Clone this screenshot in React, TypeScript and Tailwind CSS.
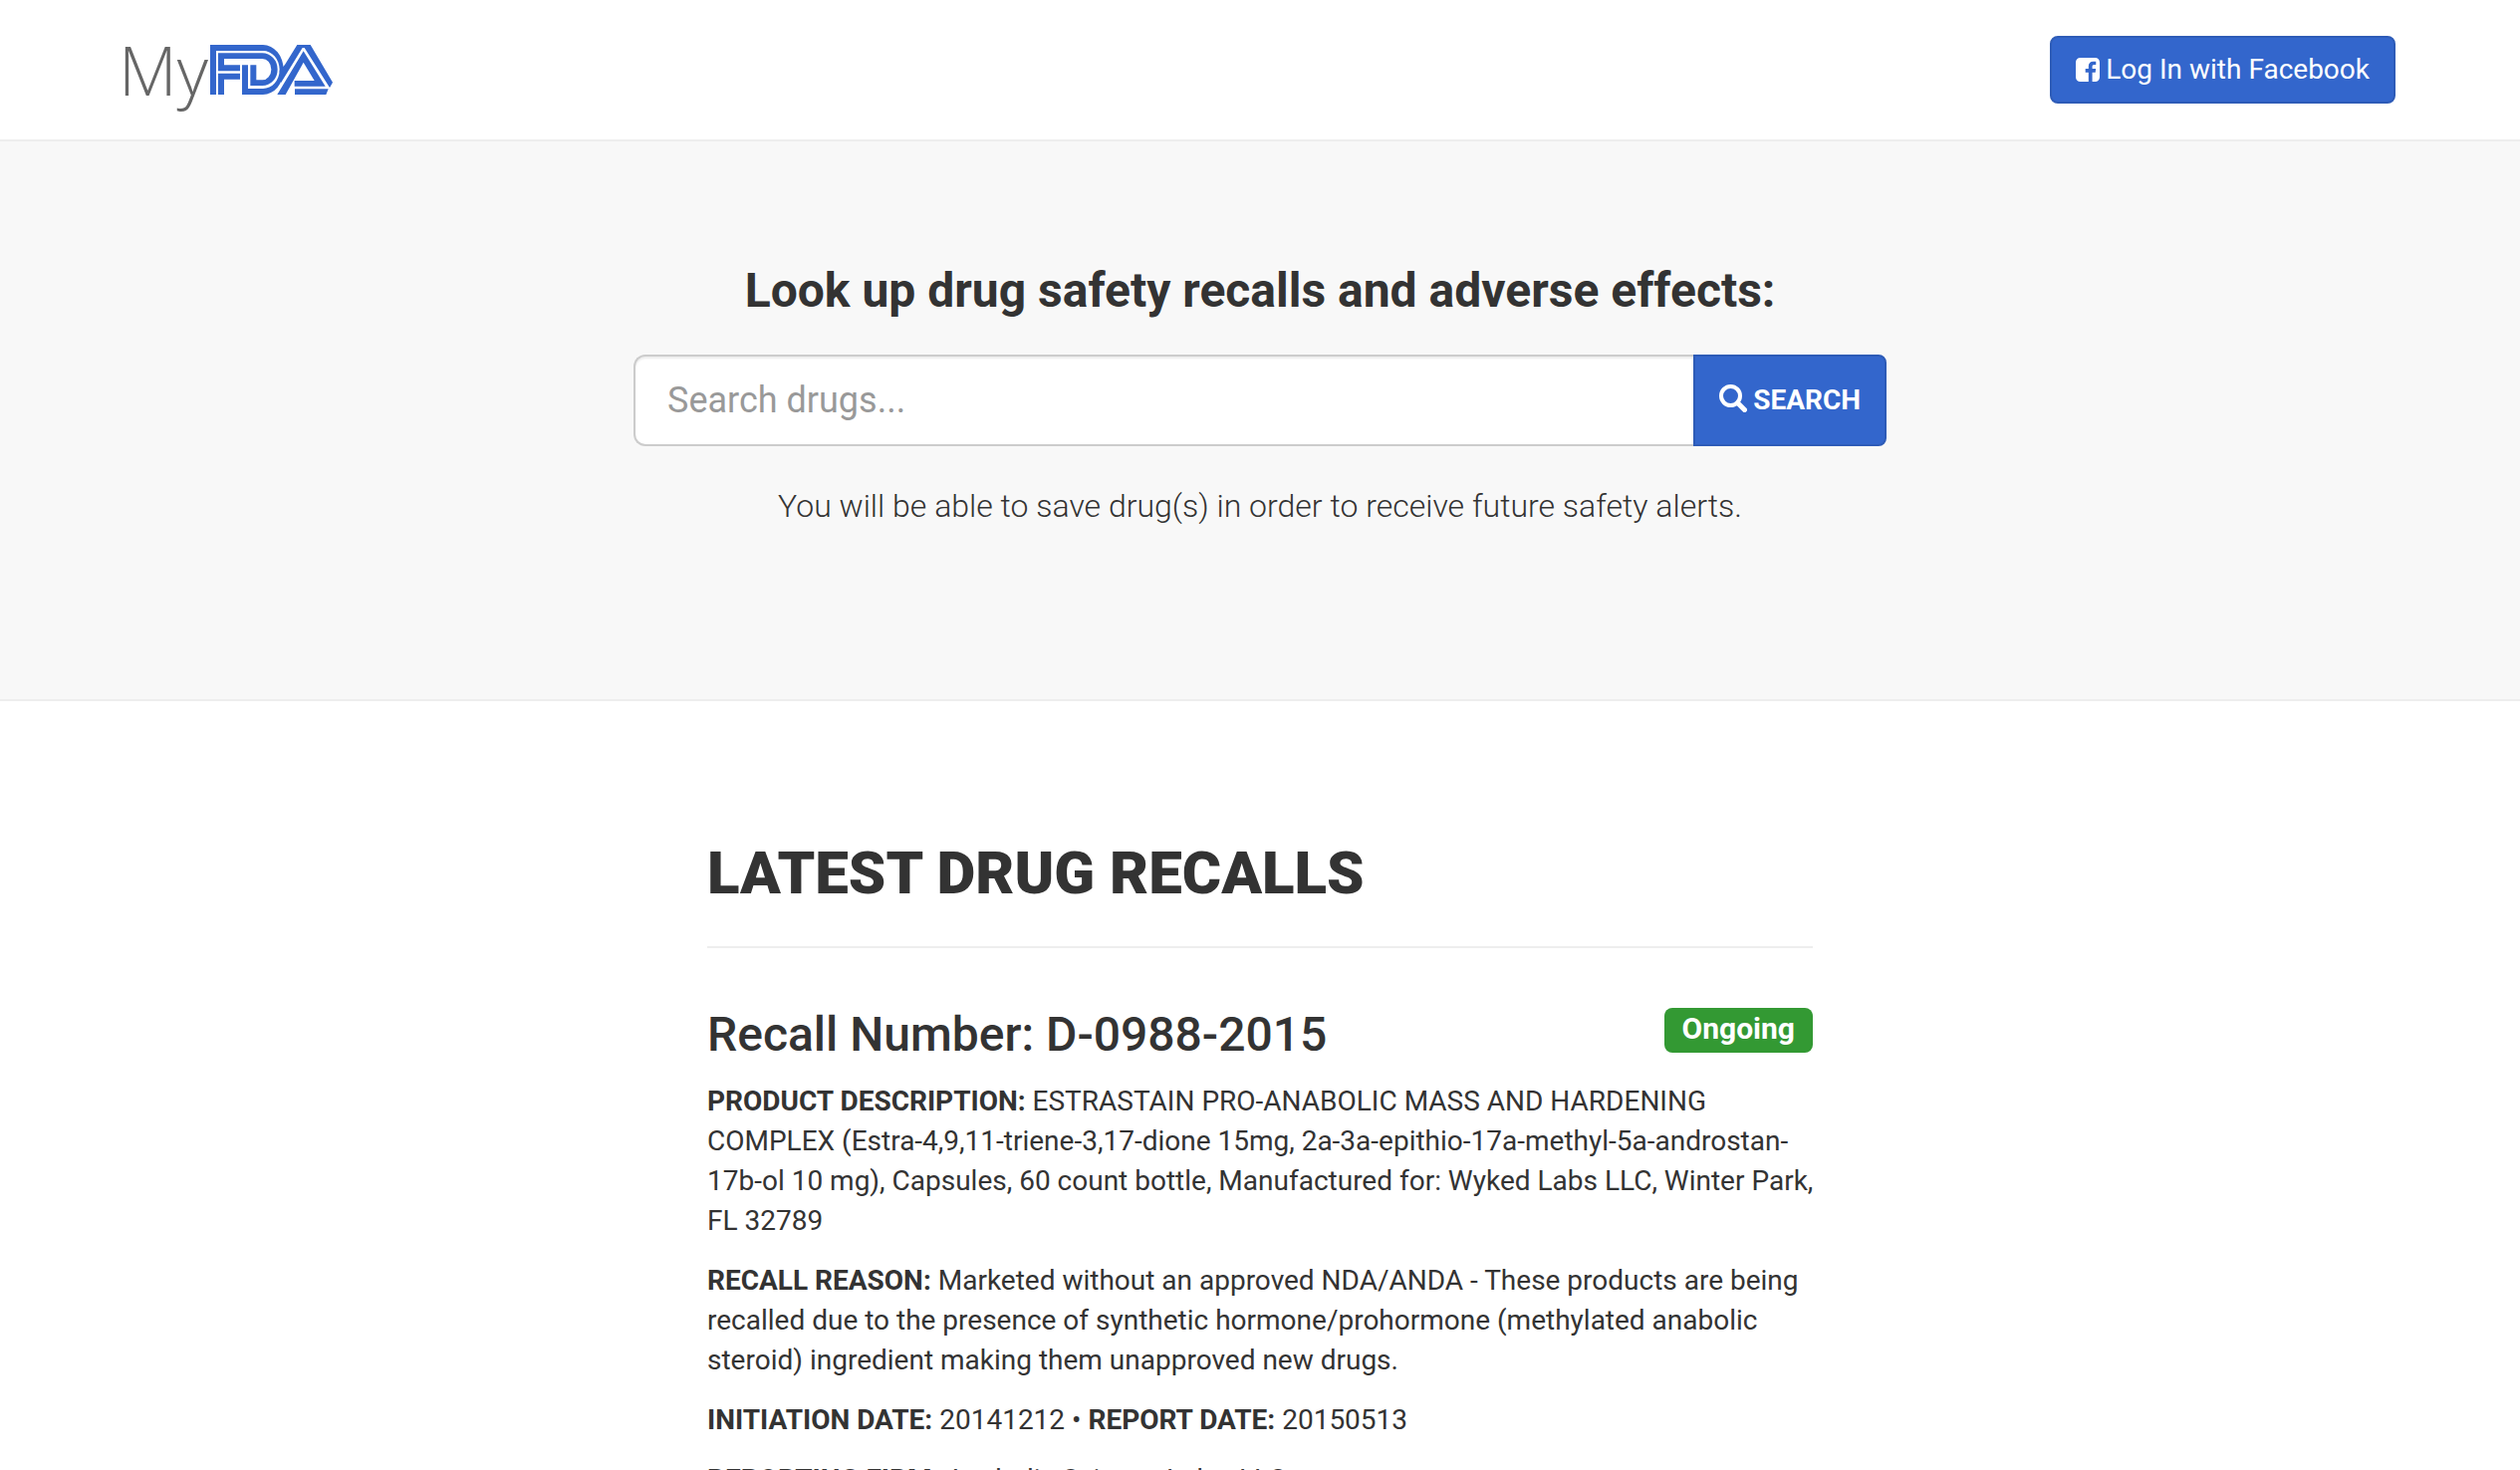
import React from "react";

const recalls = [
  {
    number: "D-0988-2015",
    status: "Ongoing",
    description:
      "ESTRASTAIN PRO-ANABOLIC MASS AND HARDENING COMPLEX (Estra-4,9,11-triene-3,17-dione 15mg, 2a-3a-epithio-17a-methyl-5a-androstan-17b-ol 10 mg), Capsules, 60 count bottle, Manufactured for: Wyked Labs LLC, Winter Park, FL 32789",
    reason:
      "Marketed without an approved NDA/ANDA - These products are being recalled due to the presence of synthetic hormone/prohormone (methylated anabolic steroid) ingredient making them unapproved new drugs.",
    initiated: "20141212",
    reported: "20150513",
    firm: "Anabolic Science Labs, LLC",
  },
];

function FdaMark() {
  return (
    <svg viewBox="303 45 369 150" className="h-[50px] w-[123px]" role="img" aria-label="FDA">
      <g fill="#3366cc">
        <path d="M303 45H462A62 75 0 0 1 462 195H399V106H417V177H462A50 57 0 0 0 462 63H321V195H303Z" />
        <path d="M327 70H460A46 49 0 0 1 460 168H424V106H442V151H460A27 32 0 0 0 460 87H345V106H393V124H327Z" />
        <path d="M327 131H393V149H345V195H327Z" />
        <path d="M565 45H605L672 158L663 174L587 54H581L516 160L512 122L528 105Z" />
        <path d="M558 178H659L652 195H558Z" />
        <path d="M584 64L650 170H557V153H617L584 98L530 195H505Z" />
      </g>
    </svg>
  );
}

function FacebookIcon() {
  return (
    <svg viewBox="0 128 1536 1536" className="size-6" fill="currentColor" aria-hidden="true">
      <path d="M1248 128q119 0 203.500 84.500t84.500 203.500v960q0 119-84.500 203.500t-203.500 84.500h-188v-595h199l30-232h-229v-148q0-56 23.500-84t91.500-28l122-1v-207q-63-9-178-9-136 0-217.500 80t-81.500 226v171h-200v232h200v595h-532q-119 0-203.500-84.500t-84.500-203.500v-960q0-119 84.500-203.500t203.500-84.500h960z" />
    </svg>
  );
}

function SearchIcon() {
  return (
    <svg viewBox="0 0 28 28" className="-mt-1 size-7" fill="none" stroke="currentColor" aria-hidden="true">
      <circle cx="11.500" cy="11.500" r="9.500" strokeWidth="4" />
      <path d="M18.500 18.500L25.500 25.500" strokeWidth="5" strokeLinecap="round" />
    </svg>
  );
}

export default function App() {
  return (
    <div className="min-h-screen bg-white font-['Roboto',sans-serif] text-[28px] leading-10 text-[#333333]">
      <header className="border-b-2 border-[#eeeeee]">
        <div className="mx-auto flex h-[140px] max-w-[2340px] items-center justify-between px-[30px]">
          <a href="#" aria-label="MyFDA" className="-ml-[6px] flex items-center gap-[2px]">
            <span className="font-['Open_Sans',sans-serif] text-[68px] leading-[92px] font-light text-[#666666]">My</span>
            <FdaMark />
          </a>
          <button
            type="button"
            className="flex items-center gap-[6px] rounded-lg border-2 border-[#2d5bb7] bg-[#3366cc] px-6 py-3 text-white"
          >
            <FacebookIcon />
            Log In with Facebook
          </button>
        </div>
      </header>

      <section className="flex flex-col items-center border-b-2 border-[#eeeeee] bg-[#f8f8f8] px-[30px] pt-[120px] pb-[172px]">
        <h1 className="text-5xl leading-[60px] font-bold">Look up drug safety recalls and adverse effects:</h1>
        <form className="mt-[34px] flex h-[92px] w-full max-w-[1258px]" onSubmit={(e) => e.preventDefault()}>
          <input
            type="search"
            aria-label="Search drugs"
            placeholder="Search drugs..."
            className="min-w-0 flex-1 rounded-l-xl border-2 border-r-0 border-[#cccccc] bg-white px-8 text-4xl inset-shadow-[0_2px_2px_#00000013] outline-none placeholder:text-[#999999]"
          />
          <button
            type="submit"
            className="flex items-center gap-[6px] rounded-r-lg border-2 border-[#2d5bb7] bg-[#3366cc] px-6 font-bold text-white"
          >
            <SearchIcon />
            SEARCH
          </button>
        </form>
        <p className="mt-[38px] text-[32px] leading-[44px] font-light">
          You will be able to save drug(s) in order to receive future safety alerts.
        </p>
      </section>

      <main className="mx-auto max-w-[1170px] px-[30px] pt-[140px]">
        <h2 className="border-b-2 border-[#eeeeee] pb-10 text-[60px] leading-[66px] font-black">LATEST DRUG RECALLS</h2>
        {recalls.map((r) => (
          <article key={r.number} className="mt-[60px]">
            <div className="flex items-start justify-between">
              <h3 className="text-5xl leading-[54px] font-medium">Recall Number: {r.number}</h3>
              <span className="rounded-lg bg-[#339933] px-[18px] pt-[6px] pb-[9px] text-[30px] leading-[30px] font-bold text-white">
                {r.status}
              </span>
            </div>
            <div className="-mr-1 mt-5 flex flex-col gap-5">
              <p>
                <strong>PRODUCT DESCRIPTION:</strong> {r.description}
              </p>
              <p>
                <strong>RECALL REASON:</strong> {r.reason}
              </p>
              <p>
                <strong>INITIATION DATE:</strong> {r.initiated} • <strong>REPORT DATE:</strong> {r.reported}
              </p>
              <p>
                <strong>REPORTING FIRM:</strong> {r.firm}
              </p>
            </div>
          </article>
        ))}
      </main>
    </div>
  );
}
